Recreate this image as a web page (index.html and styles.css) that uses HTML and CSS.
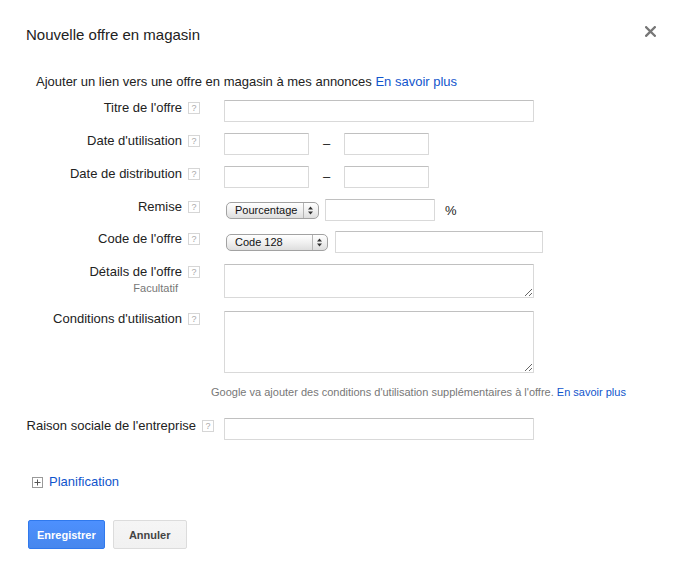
FILE: index.html
```html
<!DOCTYPE html>
<html lang="fr">
<head>
<meta charset="utf-8">
<title>Nouvelle offre en magasin</title>
<link rel="stylesheet" href="styles.css">
</head>
<body>
<div class="dialog">
  <div class="header">
    <h1 class="title">Nouvelle offre en magasin</h1>
    <span class="close" aria-label="Fermer">
      <svg width="11" height="11" viewBox="0 0 11 11"><path d="M1.2 1.2 L9.8 9.8 M9.8 1.2 L1.2 9.8" stroke="#777" stroke-width="2.3" stroke-linecap="square"/></svg>
    </span>
  </div>

  <p class="intro">Ajouter un lien vers une offre en magasin à mes annonces <a class="link" href="#">En savoir plus</a></p>

  <div class="form">
    <div class="row">
      <div class="label-cell"><div class="label-stack"><span class="label">Titre de l'offre</span></div><span class="help">?</span></div>
      <div class="field"><input class="input input--long" type="text"></div>
    </div>

    <div class="row">
      <div class="label-cell"><div class="label-stack"><span class="label">Date d'utilisation</span></div><span class="help">?</span></div>
      <div class="field"><input class="input input--date" type="text"><span class="dash">–</span><input class="input input--date" type="text"></div>
    </div>

    <div class="row">
      <div class="label-cell"><div class="label-stack"><span class="label">Date de distribution</span></div><span class="help">?</span></div>
      <div class="field"><input class="input input--date" type="text"><span class="dash">–</span><input class="input input--date" type="text"></div>
    </div>

    <div class="row row--discount">
      <div class="label-cell"><div class="label-stack"><span class="label">Remise</span></div><span class="help">?</span></div>
      <div class="field field--center">
        <div class="select select--pct"><span class="select-text">Pourcentage</span><span class="select-arrows"><svg width="5" height="9" viewBox="0 0 5 9"><path d="M2.5 0.5 L5 3.5 L0 3.5 Z M2.5 8.5 L5 5.5 L0 5.5 Z" fill="#333"/></svg></span></div>
        <input class="input input--pct" type="text"><span class="percent">%</span>
      </div>
    </div>

    <div class="row">
      <div class="label-cell"><div class="label-stack"><span class="label">Code de l'offre</span></div><span class="help">?</span></div>
      <div class="field field--center">
        <div class="select select--code"><span class="select-text">Code 128</span><span class="select-arrows"><svg width="5" height="9" viewBox="0 0 5 9"><path d="M2.5 0.5 L5 3.5 L0 3.5 Z M2.5 8.5 L5 5.5 L0 5.5 Z" fill="#333"/></svg></span></div>
        <input class="input input--code" type="text">
      </div>
    </div>

    <div class="row row--details">
      <div class="label-cell"><div class="label-stack"><span class="label">Détails de l'offre</span><span class="sublabel">Facultatif</span></div><span class="help">?</span></div>
      <div class="field"><textarea class="textarea textarea--short"></textarea></div>
    </div>

    <div class="row row--conditions">
      <div class="label-cell"><div class="label-stack"><span class="label">Conditions d'utilisation</span></div><span class="help">?</span></div>
      <div class="field"><textarea class="textarea textarea--tall"></textarea></div>
    </div>

    <p class="note">Google va ajouter des conditions d'utilisation supplémentaires à l'offre. <a class="link" href="#">En savoir plus</a></p>

    <div class="row row--company">
      <div class="label-cell label-cell--wide"><div class="label-stack"><span class="label">Raison sociale de l'entreprise</span></div><span class="help">?</span></div>
      <div class="field field--tight"><input class="input input--long" type="text"></div>
    </div>
  </div>

  <div class="expander">
    <span class="plus-box"><svg width="9" height="9" viewBox="0 0 9 9"><path d="M1.5 4.5 H7.5 M4.5 1.5 V7.5" stroke="#555" stroke-width="1"/></svg></span>
    <a class="link" href="#">Planification</a>
  </div>

  <div class="actions">
    <button class="btn btn--primary" type="button">Enregistrer</button>
    <button class="btn btn--default" type="button">Annuler</button>
  </div>
</div>
</body>
</html>
```

FILE: styles.css
```css
* { box-sizing: border-box; }

html, body {
  margin: 0;
  padding: 0;
  background: #fff;
}

body {
  font-family: "Liberation Sans", Arial, sans-serif;
  color: #222;
  font-size: 13px;
}

.dialog {
  width: 681px;
  padding: 26px 0 0 26px;
}

.header {
  display: flex;
  align-items: center;
  justify-content: space-between;
  height: 18px;
  padding-right: 25px;
}

.title {
  margin: 0;
  font-size: 15px;
  font-weight: normal;
  line-height: 18px;
  color: #222;
}

.close {
  display: flex;
  width: 11px;
  height: 11px;
  margin-top: -7px;
}

.intro {
  margin: 30px 0 10px 10px;
  line-height: 16px;
  font-size: 13px;
}

.link {
  color: #15c;
  text-decoration: none;
}

.form {
  margin-left: -26px;
}

.row {
  display: flex;
  align-items: flex-start;
  margin-bottom: 11px;
}

.row--discount { margin-bottom: 10px; }
.row--details { margin-bottom: 13px; }
.row--conditions { margin-bottom: 12px; }

.label-cell {
  width: 200px;
  flex: none;
  display: flex;
  justify-content: flex-end;
  align-items: flex-start;
}

.label-cell--wide { width: 214px; }

.label-stack {
  display: flex;
  flex-direction: column;
  align-items: flex-end;
}

.label {
  line-height: 16px;
  font-size: 13px;
  color: #222;
  white-space: nowrap;
}

.sublabel {
  font-size: 11px;
  line-height: 14px;
  color: #777;
  margin-top: 1px;
  padding-right: 4px;
}

.help {
  width: 12px;
  height: 12px;
  margin: 2px 0 0 6px;
  border: 1px solid #d6d6d6;
  color: #aaa;
  font-size: 9px;
  line-height: 10px;
  text-align: center;
  flex: none;
}

.field {
  margin-left: 24px;
  display: flex;
  align-items: flex-start;
  height: 22px;
}

.row--details .field,
.row--conditions .field { height: auto; }

.field--center { align-items: center; }
.field--tight { margin-left: 10px; }

.input {
  height: 22px;
  border: 1px solid #d9d9d9;
  border-top-color: #c0c0c0;
  border-radius: 1px;
  padding: 0 4px;
  font: inherit;
  background: #fff;
  margin: 0;
}

.input--long { width: 310px; }
.input--date { width: 85px; }
.input--pct { width: 110px; margin-left: 6px; }
.input--code { width: 208px; margin-left: 7px; }

.dash {
  width: 35px;
  height: 22px;
  text-align: center;
  line-height: 22px;
  font-size: 13px;
}

.percent {
  margin-left: 10px;
  font-size: 13px;
}

.select {
  display: flex;
  align-items: center;
  height: 17px;
  margin-left: 2px;
  border: 1px solid #a2a2a2;
  border-radius: 5px;
  background: linear-gradient(#ffffff, #f2f2f2 45%, #dedede);
  font-size: 11px;
  color: #111;
}

.select--pct { width: 93px; }
.select--code { width: 102px; }

.select-text {
  flex: 1;
  padding-left: 8px;
  line-height: 15px;
  white-space: nowrap;
}

.select-arrows {
  width: 15px;
  height: 15px;
  border-left: 1px solid #b5b5b5;
  display: flex;
  align-items: center;
  justify-content: center;
  padding-right: 2px;
}

.textarea {
  display: block;
  width: 310px;
  border: 1px solid #d9d9d9;
  border-top-color: #c0c0c0;
  border-radius: 1px;
  margin: 0;
  padding: 2px;
  font: inherit;
}

.textarea--short { height: 34px; }
.textarea--tall { height: 62px; }

.note {
  margin: 0 0 19px 211px;
  font-size: 11px;
  line-height: 14px;
  color: #777;
  white-space: nowrap;
}

.row--company { margin-bottom: 0; }

.expander {
  display: flex;
  align-items: center;
  margin: 34px 0 0 6px;
  height: 16px;
}

.plus-box {
  width: 11px;
  height: 11px;
  border: 1px solid #999;
  display: flex;
  align-items: center;
  justify-content: center;
  margin-right: 6px;
}

.expander .link {
  font-size: 13px;
  line-height: 16px;
}

.actions {
  display: flex;
  gap: 8px;
  margin: 30px 0 0 2px;
}

.btn {
  height: 29px;
  min-width: 74px;
  padding: 0 8px;
  border-radius: 2px;
  font-family: "Liberation Sans", Arial, sans-serif;
  font-size: 11px;
  font-weight: bold;
  text-align: center;
}

.btn--primary {
  background: linear-gradient(#4d90fe, #4787ed);
  border: 1px solid #3079ed;
  color: #fff;
}

.btn--default {
  background: linear-gradient(#f5f5f5, #f1f1f1);
  border: 1px solid #dcdcdc;
  color: #444;
}
```
